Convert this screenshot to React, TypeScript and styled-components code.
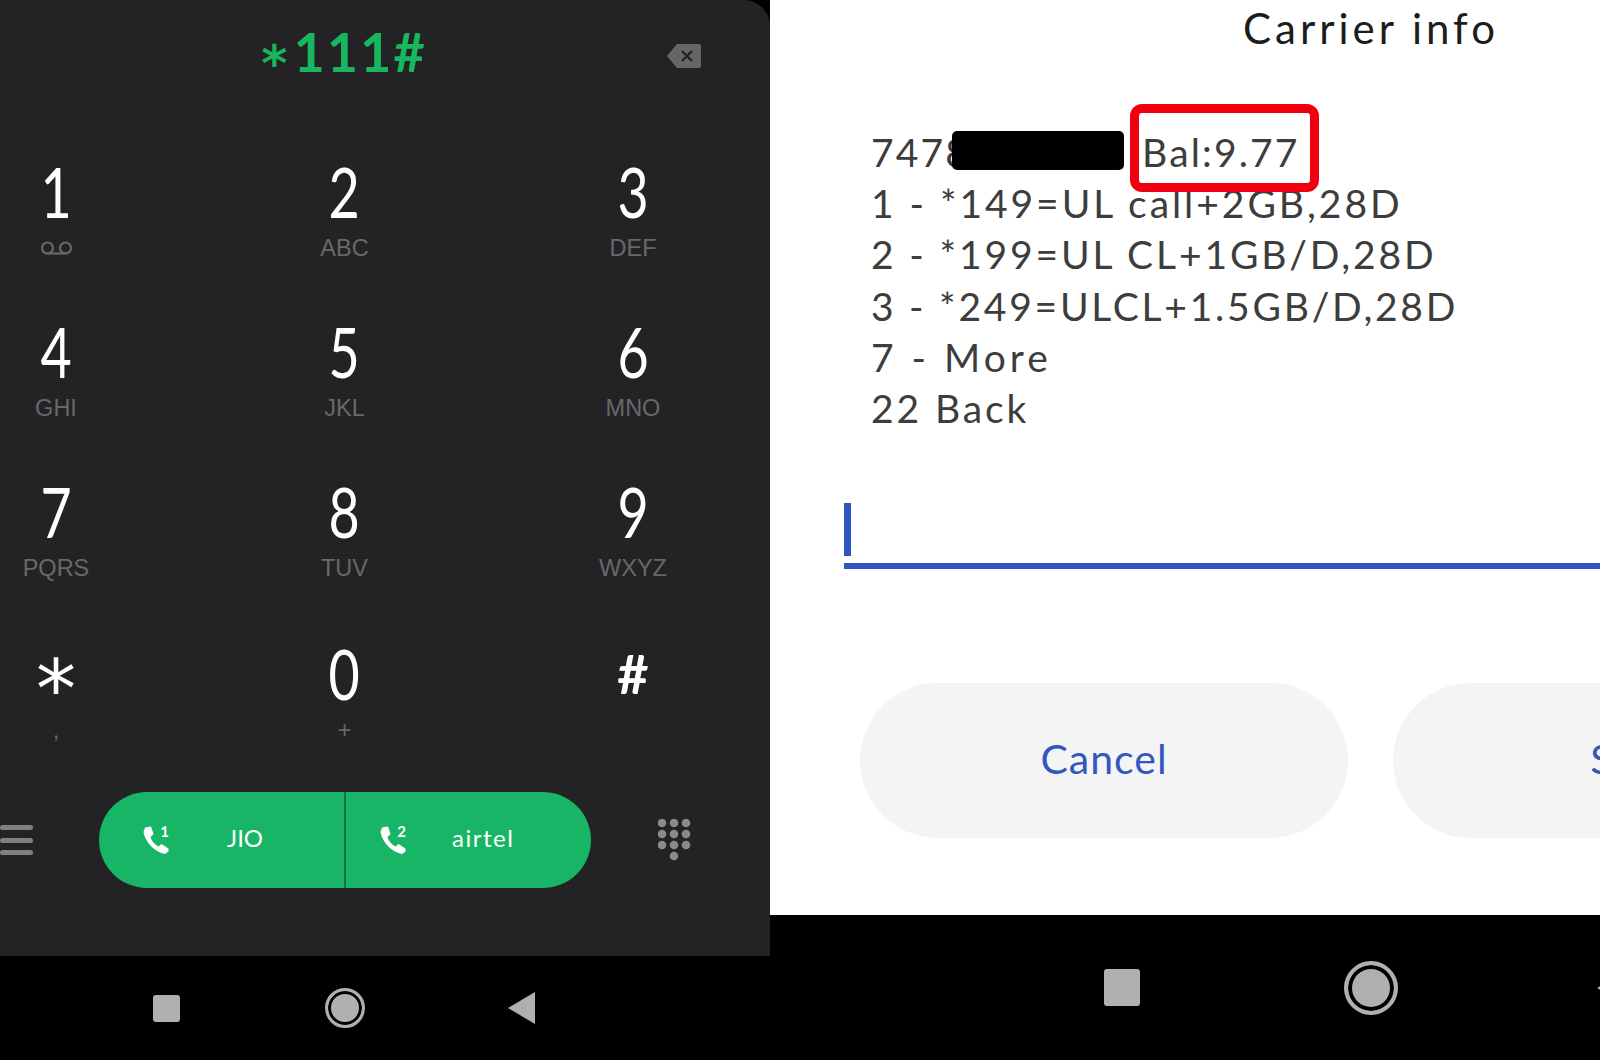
import React from "react";
import styled, { createGlobalStyle, css } from "styled-components";

const Global = createGlobalStyle`
  html, body { margin: 0; padding: 0; background: #000; }
  body { width: 1600px; height: 1060px; overflow: hidden; }
  * { box-sizing: border-box; }
`;

const Screen = styled.div`
  width: 1600px;
  height: 1060px;
  display: grid;
  grid-template-columns: 770px 830px;
  background: #000;
  overflow: hidden;
`;

const Column = styled.div`
  display: flex;
  flex-direction: column;
  min-width: 0;
  overflow: hidden;
`;

const DialPanel = styled.main`
  height: 956px;
  flex: none;
  background: #232325;
  border-top-right-radius: 26px;
  display: flex;
  flex-direction: column;
`;

const DisplayRow = styled.div`
  height: 158px;
  padding: 23px 0 0 22px;
  display: grid;
  grid-template-columns: 644px 36px;
  align-items: start;
`;

const Dialed = styled.div`
  font-family: "Lato", "Liberation Sans", sans-serif;
  font-weight: 700;
  font-size: 54px;
  line-height: 58px;
  letter-spacing: 2px;
  color: #17b65f;
  text-align: center;
`;

const DialedStar = styled.span`
  font-family: "DejaVu Sans", sans-serif;
  font-weight: 700;
  font-size: 50px;
  line-height: 0;
  vertical-align: -9px;
  letter-spacing: 6px;
`;

const BackspaceIcon = styled.svg`
  width: 36px;
  height: 26px;
  margin-top: 20px;
  display: block;
`;

const Keypad = styled.div`
  display: grid;
  grid-template-columns: 112px 465px 112px;
  grid-template-rows: 160px 160px 162px 152px;
`;

const Key = styled.div`
  display: flex;
  flex-direction: column;
  align-items: center;
`;

const glyphStyles = {
  digit: css`
    font-family: "Lato", "Liberation Sans", sans-serif;
    font-size: 69px;
    transform: scaleX(0.78);
  `,
  star: css`
    font-family: "DejaVu Sans", sans-serif;
    font-size: 80px;
    transform: translateY(16px);
  `,
  hash: css`
    font-family: "Lato", "Liberation Sans", sans-serif;
    font-weight: 700;
    font-size: 54px;
  `,
};

const Digit = styled.span<{ $kind: keyof typeof glyphStyles }>`
  display: block;
  height: 68px;
  line-height: 68px;
  color: #fff;
  ${(p) => glyphStyles[p.$kind]}
`;

const Sub = styled.span`
  display: flex;
  align-items: center;
  justify-content: center;
  height: 30px;
  margin-top: 7px;
  font-family: "Liberation Sans", Arial, sans-serif;
  font-size: 23.5px;
  line-height: 30px;
  color: #68686a;
`;

const CallRow = styled.div`
  display: flex;
  align-items: center;
  height: 96px;
`;

const MenuIcon = styled.div`
  width: 33px;
  margin-right: 66px;
  display: flex;
  flex-direction: column;
  gap: 7.5px;
`;

const MenuBar = styled.span`
  display: block;
  height: 5px;
  border-radius: 3px;
  background: #808082;
`;

const CallBar = styled.div`
  width: 492px;
  height: 96px;
  border-radius: 48px;
  background: #17b565;
  display: grid;
  grid-template-columns: 247px 245px;
`;

const CallSide = styled.div<{ $divider?: boolean; $pad: number; $gap: number }>`
  display: flex;
  align-items: center;
  padding-left: ${(p) => p.$pad}px;
  gap: ${(p) => p.$gap}px;
  color: #fff;
  border-right: ${(p) => (p.$divider ? "2px solid #0f6f40" : "none")};
`;

const CallIconWrap = styled.span`
  position: relative;
  display: block;
  width: 26px;
  height: 28px;
  flex: none;
`;

const CallSlot = styled.sup`
  position: absolute;
  top: -2px;
  right: 0;
  font-family: "Lato", "Liberation Sans", sans-serif;
  font-weight: 700;
  font-size: 15px;
  line-height: 15px;
  color: #fff;
`;

const CallIcon = styled.svg`
  width: 26px;
  height: 28px;
  display: block;
`;

const CallLabel = styled.span<{ $ls: number }>`
  font-family: "Lato", "Liberation Sans", sans-serif;
  font-size: 24px;
  line-height: 30px;
  letter-spacing: ${(p) => p.$ls}px;
  color: #fff;
  transform: translateY(-2px);
`;

const DotsIcon = styled.svg`
  width: 33px;
  height: 42px;
  margin-left: 67px;
  display: block;
`;

const NavBar = styled.nav<{ $pad: number; $gap: number }>`
  flex: 1;
  display: flex;
  align-items: center;
  padding-left: ${(p) => p.$pad}px;
  gap: ${(p) => p.$gap}px;
  background: #000;
`;

const NavSquare = styled.div<{ $size: number; $h: number }>`
  width: ${(p) => p.$size}px;
  height: ${(p) => p.$h}px;
  background: #b0b0b0;
  border-radius: 3px;
  flex: none;
`;

const NavCircle = styled.div<{ $size: number; $ring: number }>`
  width: ${(p) => p.$size}px;
  height: ${(p) => p.$size}px;
  border-radius: 50%;
  border: ${(p) => p.$ring}px solid #b0b0b0;
  background: #b0b0b0;
  box-shadow: inset 0 0 0 ${(p) => p.$ring}px #000;
  flex: none;
`;

const NavBack = styled.svg<{ $w: number; $h: number; $shift: number }>`
  width: ${(p) => p.$w}px;
  height: ${(p) => p.$h}px;
  margin-left: ${(p) => p.$shift}px;
  display: block;
  flex: none;
`;

const Dialog = styled.section`
  height: 915px;
  flex: none;
  width: 1300px;
  background: #fff;
  font-family: "Lato", "Liberation Sans", sans-serif;
`;

const Title = styled.h1`
  margin: 0;
  height: 127px;
  padding: 2px 0 0 473px;
  font-weight: 400;
  font-size: 42px;
  line-height: 52px;
  letter-spacing: 4px;
  color: #1c1c1c;
`;

const Message = styled.div`
  padding-left: 101px;
  height: 373px;
`;

const Line = styled.div<{ $ls: number }>`
  height: 51.2px;
  font-size: 39px;
  line-height: 51px;
  white-space: pre;
  letter-spacing: ${(p) => p.$ls}px;
  color: #3d3d3d;
`;

const Redacted = styled.span`
  display: inline-block;
  width: 172px;
  height: 39px;
  margin-left: -18px;
  margin-right: 18px;
  vertical-align: -3px;
  background: #000;
  border-radius: 5px;
`;

const Highlight = styled.span`
  display: inline-block;
  position: relative;
  &::after {
    content: "";
    position: absolute;
    left: -12px;
    right: -19px;
    top: -23px;
    bottom: -14px;
    border: 9px solid #f0000f;
    border-radius: 12px;
  }
`;

const InputArea = styled.div`
  margin-left: 74px;
  height: 66px;
  width: 1200px;
  border-bottom: 6px solid #2f55c0;
  padding-bottom: 5px;
`;

const Caret = styled.div`
  width: 7px;
  height: 53px;
  margin-top: 3px;
  background: #2f55c0;
`;

const Actions = styled.div`
  display: flex;
  gap: 45px;
  padding: 114px 0 0 90px;
`;

const ActionButton = styled.button`
  width: 488px;
  height: 155px;
  flex: none;
  border: none;
  border-radius: 78px;
  padding: 0 0 4px;
  background: #f4f4f5;
  color: #3358bd;
  font-family: "Lato", "Liberation Sans", sans-serif;
  font-size: 41px;
  letter-spacing: 1px;
`;

const Phone = ({ n }: { n: string }) => (
  <CallIconWrap>
    <CallIcon viewBox="0 0 26 28">
      <path
        d="M2 1.5 L8 0.5 L10.5 8 L7.5 11 C8.5 15 11.5 18.5 15.5 20.5 L18.5 18 L25.5 22.5 L25.5 25.5 L22 28 C12 26.5 2 16 0.5 6 Z"
        fill="#fff"
      />
    </CallIcon>
    <CallSlot>{n}</CallSlot>
  </CallIconWrap>
);

const VoicemailIcon = () => (
  <svg width="33" height="14" viewBox="0 0 33 14">
    <circle cx="7.5" cy="7" r="5.5" fill="none" stroke="#68686a" strokeWidth="2.2" />
    <circle cx="25.5" cy="7" r="5.5" fill="none" stroke="#68686a" strokeWidth="2.2" />
    <line x1="7.5" y1="12.5" x2="25.5" y2="12.5" stroke="#68686a" strokeWidth="2.2" />
  </svg>
);

const keys: { d: string; s: React.ReactNode; kind: keyof typeof glyphStyles }[] = [
  { d: "1", s: <VoicemailIcon />, kind: "digit" },
  { d: "2", s: "ABC", kind: "digit" },
  { d: "3", s: "DEF", kind: "digit" },
  { d: "4", s: "GHI", kind: "digit" },
  { d: "5", s: "JKL", kind: "digit" },
  { d: "6", s: "MNO", kind: "digit" },
  { d: "7", s: "PQRS", kind: "digit" },
  { d: "8", s: "TUV", kind: "digit" },
  { d: "9", s: "WXYZ", kind: "digit" },
  { d: "*", s: ",", kind: "star" },
  { d: "0", s: "+", kind: "digit" },
  { d: "#", s: "", kind: "hash" },
];

const dotCenters = [
  [4, 4], [16, 4], [28, 4],
  [4, 15], [16, 15], [28, 15],
  [4, 26], [16, 26], [28, 26],
  [16, 37],
];

export default function App() {
  return (
    <Screen>
      <Global />
      <Column>
        <DialPanel>
          <DisplayRow>
            <Dialed>
              <DialedStar>*</DialedStar>111#
            </Dialed>
            <BackspaceIcon viewBox="0 0 36 26">
              <path
                d="M11 1 H33 a2 2 0 0 1 2 2 V23 a2 2 0 0 1 -2 2 H11 L1 13 Z"
                fill="#666668"
              />
              <path d="M16 8 L26 18 M26 8 L16 18" stroke="#232325" strokeWidth="2.4" />
            </BackspaceIcon>
          </DisplayRow>
          <Keypad>
            {keys.map((k) => (
              <Key key={k.d}>
                <Digit $kind={k.kind}>{k.d}</Digit>
                <Sub>{k.s}</Sub>
              </Key>
            ))}
          </Keypad>
          <CallRow>
            <MenuIcon>
              <MenuBar />
              <MenuBar />
              <MenuBar />
            </MenuIcon>
            <CallBar>
              <CallSide $divider $pad={44} $gap={58}>
                <Phone n="1" />
                <CallLabel $ls={0}>JIO</CallLabel>
              </CallSide>
              <CallSide $pad={34} $gap={46}>
                <Phone n="2" />
                <CallLabel $ls={1.5}>airtel</CallLabel>
              </CallSide>
            </CallBar>
            <DotsIcon viewBox="0 0 33 42">
              {dotCenters.map(([x, y]) => (
                <circle key={`${x}-${y}`} cx={x} cy={y} r="4.3" fill="#8a8a8c" />
              ))}
            </DotsIcon>
          </CallRow>
        </DialPanel>
        <NavBar $pad={153} $gap={145}>
          <NavSquare $size={27} $h={27} />
          <NavCircle $size={40} $ring={3} />
          <NavBack $w={27} $h={32} $shift={-2} viewBox="0 0 27 32">
            <path d="M27 0 V32 L0 16 Z" fill="#b0b0b0" />
          </NavBack>
        </NavBar>
      </Column>
      <Column>
        <Dialog>
          <Title>Carrier info</Title>
          <Message>
            <Line $ls={2.15}>
              7478
              <Redacted />
              <Highlight>Bal:9.77</Highlight>
            </Line>
            <Line $ls={2.95}>1 - *149=UL call+2GB,28D</Line>
            <Line $ls={2.87}>2 - *199=UL CL+1GB/D,28D</Line>
            <Line $ls={2.75}>3 - *249=ULCL+1.5GB/D,28D</Line>
            <Line $ls={4}>7 - More</Line>
            <Line $ls={2.9}>22 Back</Line>
          </Message>
          <InputArea>
            <Caret />
          </InputArea>
          <Actions>
            <ActionButton>Cancel</ActionButton>
            <ActionButton>Send</ActionButton>
          </Actions>
        </Dialog>
        <NavBar $pad={334} $gap={204}>
          <NavSquare $size={36} $h={37} />
          <NavCircle $size={54} $ring={4} />
          <NavBack $w={34} $h={40} $shift={-5} viewBox="0 0 34 40">
            <path d="M34 0 V40 L0 20 Z" fill="#b0b0b0" />
          </NavBack>
        </NavBar>
      </Column>
    </Screen>
  );
}
